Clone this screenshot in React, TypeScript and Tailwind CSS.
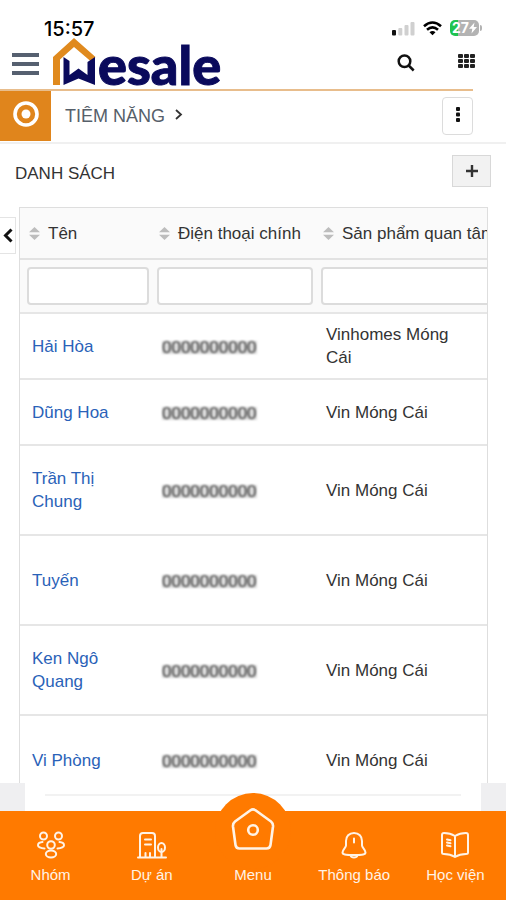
import type { ReactNode } from "react";

interface Lead {
  name: string;
  phone: string;
  product: string;
  tall?: boolean;
}

interface NavItem {
  label: string;
  icon: ReactNode;
}

// phone numbers stay masked in the list
const leads: Lead[] = [
  { name: "Hải Hòa", phone: "0000000000", product: "Vinhomes Móng Cái" },
  { name: "Dũng Hoa", phone: "0000000000", product: "Vin Móng Cái" },
  { name: "Trần Thị Chung", phone: "0000000000", product: "Vin Móng Cái", tall: true },
  { name: "Tuyến", phone: "0000000000", product: "Vin Móng Cái", tall: true },
  { name: "Ken Ngô Quang", phone: "0000000000", product: "Vin Móng Cái", tall: true },
  { name: "Vi Phòng", phone: "0000000000", product: "Vin Móng Cái", tall: true },
];

const columns = ["Tên", "Điện thoại chính", "Sản phẩm quan tâm"];

const stroke = {
  fill: "none",
  stroke: "currentColor",
  strokeWidth: 2,
  strokeLinecap: "round" as const,
  strokeLinejoin: "round" as const,
};

const GroupIcon = () => (
  <svg width="28" height="28" viewBox="0 0 28 28" {...stroke} aria-hidden="true">
    <circle cx="6.5" cy="5" r="3.5" />
    <circle cx="21.5" cy="5" r="3.5" />
    <circle cx="14" cy="14" r="3.8" />
    <ellipse cx="14" cy="23" rx="5.2" ry="3.5" />
    <path d="M5.5 11C2.5 11.2 1 12.5 1 14.2s2.5 3.3 6.5 3.3M22.5 11c3 .2 4.500 1.500 4.500 3.200s-2.500 3.300-6.500 3.300" />
  </svg>
);

const ProjectIcon = () => (
  <svg width="30" height="28" viewBox="0 0 30 28" {...stroke} aria-hidden="true">
    <path d="M1 26.5h28M3 26.5V5q0-3 3-3h9q3 0 3 3v21.5M8 8.5h6M8 13.5h6M8.500 26v-4M13 26v-4" />
    <ellipse cx="24.5" cy="16.5" rx="3.5" ry="4.5" />
    <path d="M24.5 18v8" />
  </svg>
);

const BellIcon = () => (
  <svg width="28" height="28" viewBox="0 0 28 28" {...stroke} aria-hidden="true">
    <path d="M14 2C9 2 6 5.5 6 10v4.5c0 2-3.500 4-3.500 7C2.500 23.500 5 24 14 24s11.500-.5 11.500-2.500c0-3-3.500-5-3.500-7V10c0-4.500-3-8-8-8z" />
    <path d="M10.5 24.5c1 2.700 6 2.700 7 0M14 7.500v4" />
  </svg>
);

const BookIcon = () => (
  <svg width="28" height="28" viewBox="0 0 28 28" {...stroke} aria-hidden="true">
    <path d="M14 5C10 2.500 6 2 3 2Q1 2 1 4v17.500Q1 23 3 23c3 0 7 .5 11 3 4-2.500 8-3 11-3q2 0 2-1.500V4q0-2-2-2c-3 0-7 .5-11 3zM14 5v21" />
    <path d="M6 8.500l3.500.8M6 11.500l3.500.8M6 14.500l3.500.8" />
  </svg>
);

const MenuIcon = () => (
  <svg width="44" height="44" viewBox="0 0 44 44" {...stroke} strokeWidth={2.6} aria-hidden="true">
    <path d="M19.500 3.300Q22 1.500 24.500 3.300L40 14.500Q42.300 16.500 42 19.500L39.500 38Q39 41.500 35.500 41.500H8.500Q5 41.500 4.500 38L2 19.500Q1.700 16.500 4 14.500z" />
    <circle cx="22" cy="23" r="4.800" />
  </svg>
);

const leftNav: NavItem[] = [
  { label: "Nhóm", icon: <GroupIcon /> },
  { label: "Dự án", icon: <ProjectIcon /> },
];

const rightNav: NavItem[] = [
  { label: "Thông báo", icon: <BellIcon /> },
  { label: "Học viện", icon: <BookIcon /> },
];

const StatusBar = () => (
  <div className="flex h-[38px] items-end justify-between pl-11 pr-6">
    <span className="font-['Inter',sans-serif] text-[20px] font-medium leading-[18px] text-black">15:57</span>
    <div className="flex items-center gap-2 pb-0.5">
      <svg width="23" height="15" viewBox="0 0 23 15" aria-hidden="true">
        <rect x="0" y="9" width="4" height="5.5" rx="1" fill="#111" />
        <rect x="6.3" y="7" width="4" height="7.5" rx="1" fill="#d0d0d0" />
        <rect x="12.5" y="4" width="4" height="10.5" rx="1" fill="#d0d0d0" />
        <rect x="18.5" y="1" width="4" height="13.5" rx="1" fill="#d0d0d0" />
      </svg>
      <svg width="19" height="15" viewBox="0 0 19 15" fill="none" stroke="#000" strokeWidth="2.6" aria-hidden="true">
        <path d="M1 5.3Q9.5-2.3 18 5.3M4 8.8q5.500-4.800 11 0" />
        <path d="M6.5 11.3q3-2.400 6 0L9.500 14.300z" fill="#000" stroke="none" />
      </svg>
      <div className="flex items-center gap-px">
        <div className="flex h-4 w-[29px] items-center justify-center rounded-[5px] bg-linear-to-r from-[#1fc34f] from-27% to-[#b3b3b3] to-27% font-['Inter',sans-serif] text-[14px] font-bold leading-4 text-white">
          27
          <svg width="8" height="12" viewBox="0 0 8 11" fill="#fff" aria-hidden="true">
            <path d="M5.500 0L0 6.300H3.300L2.500 11 8 4.500H4.700z" />
          </svg>
        </div>
        <div className="h-1.5 w-0.5 rounded-r bg-[#b3b3b3]" />
      </div>
    </div>
  </div>
);

const Logo = () => (
  <svg width="180" height="51" viewBox="0 0 180 51" role="img" aria-label="Wesale" className="overflow-visible">
    <path d="M0 47V19L21 0l21.500 19-4.500 4.500L21 9 7 21.500V47z" fill="#e08a1e" />
    <path d="M10.500 19L16.500 23v14l9-6.500 9 6.500V24l7.500-5V47L25.500 40.500 10.500 47z" fill="#0a0a5c" />
    <text
      x="45"
      y="47"
      fill="#0a0a5c"
      stroke="#0a0a5c"
      strokeWidth="1"
      fontFamily="Lato, sans-serif"
      fontWeight="900"
      fontSize="54"
    >
      esale
    </text>
  </svg>
);

const Header = () => (
  <header className="mr-[33px] flex h-[53px] items-start border-b-2 border-[#e8bd8c] pl-3">
    <button aria-label="Mở menu" className="mt-[15px] flex w-[27px] flex-col gap-[5px]">
      <span className="h-1 w-full bg-[#566070]" />
      <span className="h-1 w-full bg-[#566070]" />
      <span className="h-1 w-full bg-[#566070]" />
    </button>
    <a href="#" className="ml-3.5">
      <Logo />
    </a>
    <button aria-label="Tìm kiếm" className="ml-auto mt-4">
      <svg width="18" height="18" viewBox="0 0 18 18" fill="none" stroke="#111" strokeWidth="2.5" aria-hidden="true">
        <circle cx="7.5" cy="7.3" r="5.8" />
        <path d="M11.700 11.500l5 5" />
      </svg>
    </button>
    <button aria-label="Ứng dụng" className="-mr-1 ml-[42px] mt-4">
      <svg width="20" height="15" viewBox="0 0 20 15" fill="#222" aria-hidden="true">
        {[1, 7, 13].map((x) =>
          [0, 5, 10].map((y) => <rect key={`${x}-${y}`} x={x} y={y} width="5" height="4" rx="1" />)
        )}
      </svg>
    </button>
  </header>
);

const Breadcrumb = () => (
  <div className="flex h-[53px] items-start border-b-2 border-[#f0f0f0] pr-[33px]">
    <div className="flex h-[50px] w-[51px] items-center justify-center bg-[#e0851c]">
      <svg width="26" height="26" viewBox="0 0 26 26" fill="none" stroke="#fff" className="mb-1" aria-hidden="true">
        <circle cx="13" cy="13" r="11" strokeWidth="3.6" />
        <circle cx="13" cy="13" r="4.5" fill="#fff" stroke="none" />
      </svg>
    </div>
    <a href="#" className="ml-3.5 mt-[13px] text-[18px] leading-6 text-[#56606a]">
      TIÊM NĂNG
    </a>
    <svg width="8" height="11" viewBox="0 0 8 11" fill="none" stroke="#333" strokeWidth="1.8" className="ml-2.5 mt-[18px]" aria-hidden="true">
      <path d="M1 1l5 4.500L1 10" />
    </svg>
    <button aria-label="Tùy chọn" className="ml-auto mt-1.5 flex h-[38px] w-[31px] items-center justify-center rounded-sm border border-[#dcdcdc]">
      <svg width="4" height="15" viewBox="0 0 4 15" fill="#111" className="mb-1" aria-hidden="true">
        <rect width="4" height="4" rx="1" />
        <rect y="5.5" width="4" height="4" rx="1" />
        <rect y="11" width="4" height="4" rx="1" />
      </svg>
    </button>
  </div>
);

const SortIcon = () => (
  <svg width="11" height="13" viewBox="0 0 11 13" fill="#bdbdbd" aria-hidden="true">
    <path d="M5.500 0L11 5.300H0zM5.500 13L11 7.700H0z" />
  </svg>
);

const LeadTable = () => (
  <div className="relative">
    <button aria-label="Mở bộ lọc" className="absolute left-0 top-2.5 flex h-[37px] w-4 items-center justify-center border border-l-0 border-[#e4e4e4] bg-white">
      <svg width="10" height="15" viewBox="0 0 10 15" fill="none" stroke="#111" strokeWidth="3" aria-hidden="true">
        <path d="M8.500 1.500l-6 6 6 6" />
      </svg>
    </button>
    <div className="ml-[19px] mr-[18px] overflow-hidden border border-[#dedede]">
      <table className="w-full min-w-[482px] table-fixed border-collapse text-left">
        <colgroup>
          <col className="w-[133px]" />
          <col className="w-[164px]" />
          <col />
        </colgroup>
        <thead className="bg-[#fafafa]">
          <tr className="h-[51px] border-b-2 border-[#e2e2e2]">
            {columns.map((column) => (
              <th key={column} className="whitespace-nowrap py-0 pl-1.5 pr-0 font-normal text-[#333] first:pl-[9px]">
                <button className="flex items-center gap-2">
                  <SortIcon />
                  {column}
                </button>
              </th>
            ))}
          </tr>
          <tr className="h-[54px] border-b-2 border-[#e6e6e6]">
            {columns.map((column) => (
              <td key={column} className="px-1 py-0 align-middle first:pl-[7px]">
                <input
                  aria-label={column}
                  className="block h-[38px] w-full rounded-sm border-2 border-[#dcdcdc] bg-white px-2 outline-none"
                />
              </td>
            ))}
          </tr>
        </thead>
        <tbody>
          {leads.map((lead) => (
            <tr key={lead.name} className={`border-b-2 border-[#e6e6e6] ${lead.tall ? "h-[90px]" : "h-[66px]"}`}>
              <td className="px-3 py-0">
                <a href="#" className="text-[#2a62b8]">{lead.name}</a>
              </td>
              <td className="py-0 pl-[9px]">
                <span className="inline-block bg-[#dcdcdc] align-middle leading-[13px] text-[#333] blur-[1px]">{lead.phone}</span>
              </td>
              <td className="py-0 pl-[9px] pr-7 text-[#333]">{lead.product}</td>
            </tr>
          ))}
        </tbody>
      </table>
    </div>
  </div>
);

const NavLink = ({ label, icon }: NavItem) => (
  <a href="#" className="flex flex-1 flex-col items-center gap-1.5 pt-5">
    {icon}
    <span>{label}</span>
  </a>
);

const BottomNav = () => (
  <nav className="relative flex h-[89px] shrink-0 bg-[#ff7a00] text-[15px] leading-5 text-[#fff3e6]">
    <div className="absolute -top-[18px] left-1/2 size-[76px] -translate-x-1/2 rounded-full bg-[#ff7a00]" />
    {leftNav.map((item) => (
      <NavLink key={item.label} {...item} />
    ))}
    <a href="#" className="relative -mt-1 flex flex-1 flex-col items-center gap-3.5">
      <MenuIcon />
      <span>Menu</span>
    </a>
    {rightNav.map((item) => (
      <NavLink key={item.label} {...item} />
    ))}
  </nav>
);

export default function App() {
  return (
    <div className="flex h-screen flex-col overflow-hidden bg-white font-['Liberation_Sans',Arial,sans-serif] text-[17px] leading-[23px]">
      <StatusBar />
      <Header />
      <Breadcrumb />
      <main className="min-h-0 flex-1 overflow-hidden">
        <div className="flex items-center justify-between px-[15px] pb-5 pt-[11px]">
          <h1 className="pt-1 text-[#333]">DANH SÁCH</h1>
          <button aria-label="Thêm" className="flex h-8 w-[39px] items-center justify-center border border-[#d8d8d8] bg-[#f2f2f2]">
            <svg width="12" height="12" viewBox="0 0 12 12" stroke="#333" strokeWidth="2.4" aria-hidden="true">
              <path d="M6 0v12M0 6h12" />
            </svg>
          </button>
        </div>
        <LeadTable />
      </main>
      <div className="h-7 shrink-0 bg-[#efeff1] px-[25px]">
        <div className="h-full bg-white px-5 pt-[11px]">
          <div className="h-0.5 bg-[#f2f2f2]" />
        </div>
      </div>
      <BottomNav />
    </div>
  );
}
